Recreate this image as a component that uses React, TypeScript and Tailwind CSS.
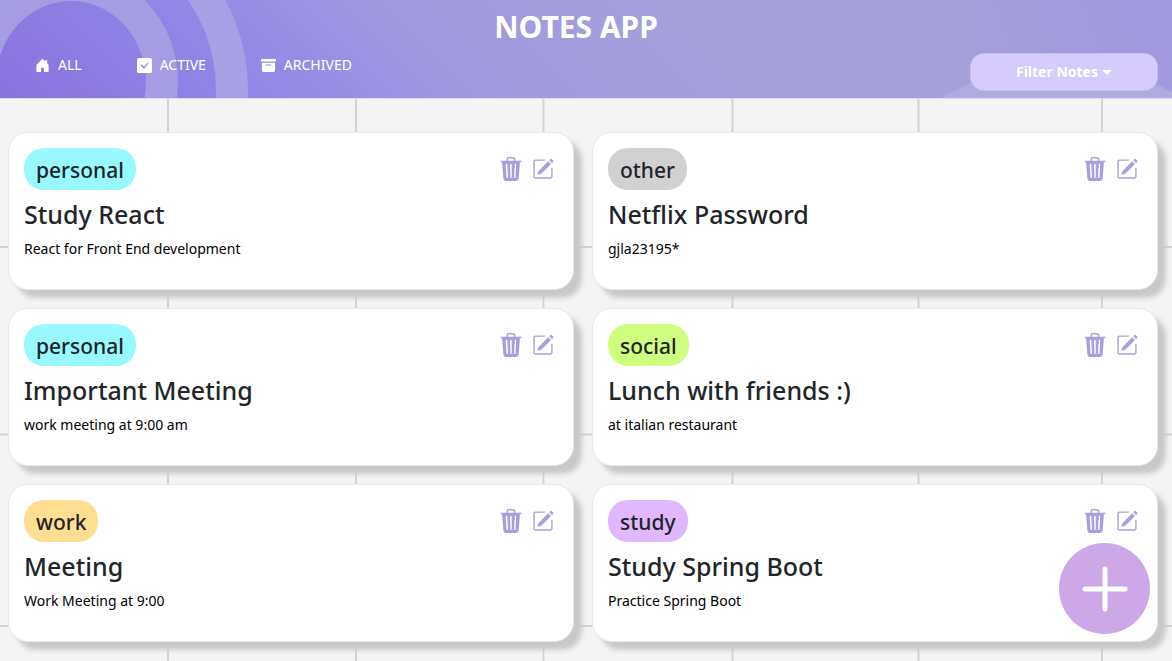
import { useState } from "react";
import {
  BsArchiveFill,
  BsCheckSquareFill,
  BsHouseDoorFill,
  BsPencilSquare,
  BsTrash3Fill,
} from "react-icons/bs";

type Category = "personal" | "other" | "social" | "work" | "study";

interface Note {
  category: Category;
  title: string;
  body: string;
}

const notes: Note[] = [
  { category: "personal", title: "Study React", body: "React for Front End development" },
  { category: "other", title: "Netflix Password", body: "gjla23195*" },
  { category: "personal", title: "Important Meeting", body: "work meeting at 9:00 am" },
  { category: "social", title: "Lunch with friends :)", body: "at italian restaurant" },
  { category: "work", title: "Meeting", body: "Work Meeting at 9:00" },
  { category: "study", title: "Study Spring Boot", body: "Practice Spring Boot" },
];

const tagColors: Record<Category, string> = {
  personal: "bg-[#97f9ff]",
  other: "bg-[#d1d1d1]",
  social: "bg-[#cfff7f]",
  work: "bg-[#ffdd91]",
  study: "bg-[#dfb8ff]",
};

function HeaderArt() {
  return (
    <svg
      aria-hidden="true"
      className="absolute inset-0 h-full w-full"
      viewBox="0 0 1172 98"
      preserveAspectRatio="none"
    >
      <defs>
        <linearGradient id="base" gradientUnits="userSpaceOnUse" x1="0" y1="98" x2="400" y2="-302">
          <stop offset="0" stopColor="#8a72de" />
          <stop offset="0.3" stopColor="#9085e4" />
          <stop offset="0.5" stopColor="#9b93e4" />
          <stop offset="0.6" stopColor="#a099df" />
          <stop offset="1" stopColor="#a5a0d9" />
        </linearGradient>
        <linearGradient id="edge" gradientUnits="userSpaceOnUse" x1="940" y1="80" x2="1160" y2="0">
          <stop offset="0" stopColor="#a298df" stopOpacity="0" />
          <stop offset="1" stopColor="#a198df" />
        </linearGradient>
      </defs>
      <rect width="1172" height="98" fill="url(#base)" />
      <rect x="900" width="272" height="98" fill="url(#edge)" />
      <ellipse cx="71" cy="90" rx="161" ry="168" fill="none" stroke="#a8a0e4" strokeWidth="32" />
      <ellipse cx="71" cy="82" rx="91" ry="97" fill="none" stroke="#a69ce3" strokeWidth="32" />
      <ellipse cx="1062" cy="281" rx="228" ry="216" fill="#b0abdf" />
    </svg>
  );
}

function GridLines() {
  return (
    <svg
      aria-hidden="true"
      className="absolute inset-0 h-full w-full"
      viewBox="0 0 1172 562"
      preserveAspectRatio="none"
    >
      <path
        d="M168 0V562M356 0V562M543.5 0V562M732.5 0V562M918.5 0V562M1102 0V562M0 148H1172M0 335.500H1172M0 527H1172"
        fill="none"
        stroke="#d3d3d3"
        strokeWidth="2"
      />
    </svg>
  );
}

function NoteCard({ note }: { note: Note }) {
  return (
    <article className="flex min-h-[158px] items-start justify-between rounded-[20px] border border-[#efe6e8] bg-white px-[15px] pt-[15px] shadow-[8px_8px_5px_#c9c9c9]">
      <div className="min-w-0">
        <span
          className={`inline-flex h-[42px] items-center rounded-[20px] px-3 pt-[3px] text-[21px] font-medium ${tagColors[note.category]}`}
        >
          {note.category}
        </span>
        <h2 className="mt-2 text-[25px] leading-8 font-medium">{note.title}</h2>
        <p className="mt-[7px] text-sm leading-6 text-black">{note.body}</p>
      </div>
      <div className="flex gap-[9px] pt-[9px] pr-1 text-[#a8a0dc]">
        <button type="button" aria-label={`Delete ${note.title}`}>
          <BsTrash3Fill size={24} />
        </button>
        <button type="button" aria-label={`Edit ${note.title}`}>
          <BsPencilSquare size={22} />
        </button>
      </div>
    </article>
  );
}

export default function App() {
  const [active, setActive] = useState("ALL");
  const tabs = [
    { label: "ALL", icon: <BsHouseDoorFill size={15} /> },
    { label: "ACTIVE", icon: <BsCheckSquareFill size={15} /> },
    { label: "ARCHIVED", icon: <BsArchiveFill size={15} /> },
  ];

  return (
    <div className="flex h-screen flex-col overflow-hidden bg-[#f4f4f4] font-['Noto_Sans','Open_Sans',sans-serif] text-[#212529]">
      <header className="relative h-[99px] shrink-0 border-b border-[#ddd9f2] text-white">
        <HeaderArt />
        <div className="relative">
          <h1 className="pt-[7px] pr-5 text-center text-[30px] leading-10 font-bold">NOTES APP</h1>
          <div className="flex items-start justify-between pr-[14px] pl-[35px]">
            <nav className="flex gap-[55px] pt-[6px]">
              {tabs.map((tab) => (
                <a
                  key={tab.label}
                  href="#notes"
                  aria-current={active === tab.label ? "page" : undefined}
                  onClick={() => setActive(tab.label)}
                  className="flex items-center gap-2 text-sm leading-6"
                >
                  {tab.icon}
                  {tab.label}
                </a>
              ))}
            </nav>
            <button
              type="button"
              className="mt-[6px] flex h-[38px] w-[188px] items-center justify-center gap-1 rounded-[14px] border border-[#c9bff5] bg-[#d5cbfc] text-sm font-bold"
            >
              Filter Notes
              <span className="border-x-[5px] border-t-[5px] border-x-transparent border-t-white" />
            </button>
          </div>
        </div>
      </header>

      <main id="notes" className="relative min-h-0 flex-1 overflow-hidden">
        <GridLines />
        <div className="relative grid grid-cols-2 gap-x-[18px] gap-y-[18px] pt-[33px] pr-[14px] pl-2">
          {notes.map((note) => (
            <NoteCard key={note.title} note={note} />
          ))}
        </div>
      </main>

      <button
        type="button"
        aria-label="Add note"
        className="fixed right-[22px] bottom-[27px] flex size-[91px] items-center justify-center rounded-full bg-[#cca8e8] text-white"
      >
        <svg width="46" height="46" viewBox="0 0 46 46" fill="none" stroke="currentColor" strokeWidth="5" strokeLinecap="round">
          <path d="M23 3V43M3 23H43" />
        </svg>
      </button>
    </div>
  );
}
